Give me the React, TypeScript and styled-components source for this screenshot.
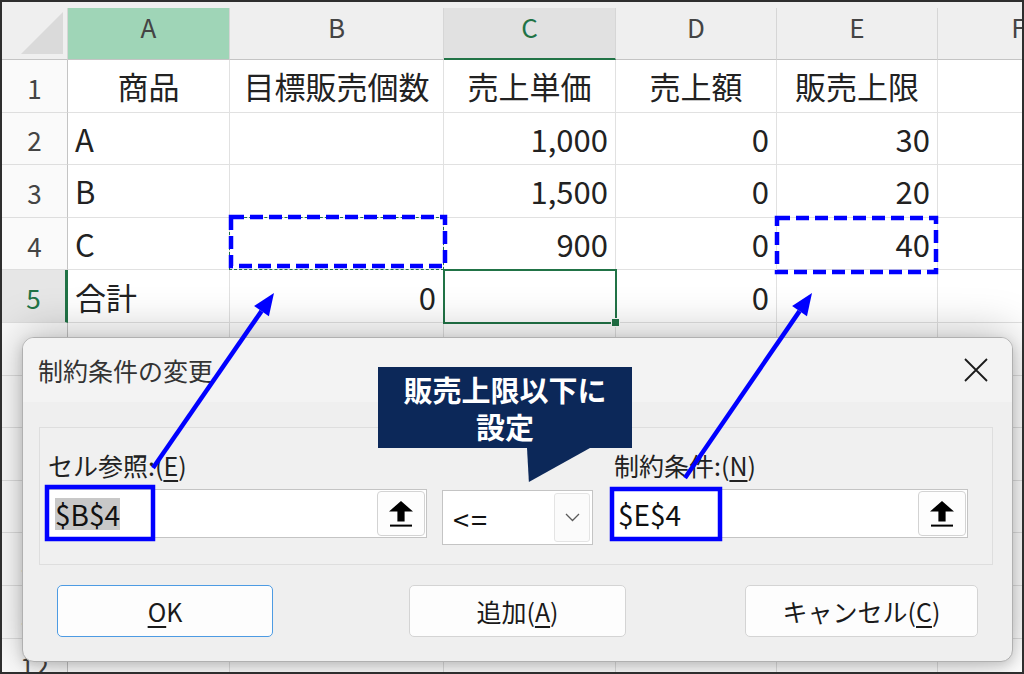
import styled, { createGlobalStyle, css } from 'styled-components'

const GlobalStyle = createGlobalStyle`
  html, body {
    margin: 0;
    padding: 0;
    background: #ffffff;
  }
  body {
    font-family: "Noto Sans CJK JP", "Noto Sans", sans-serif;
  }
`

const Frame = styled.div`
  position: relative;
  width: 1024px;
  height: 674px;
  box-sizing: border-box;
  border: 2px solid #2e2e2e;
  overflow: hidden;
  background: #ffffff;
`

const TopStrip = styled.div`
  height: 6px;
  background: #efefef;
`

const Sheet = styled.div`
  display: grid;
  grid-template-columns: 66px 162px 214px 172px 161px 161px 162px;
  grid-template-rows: 52px;
  grid-auto-rows: 52.6px;
  width: max-content;
`

const Corner = styled.div`
  position: relative;
  box-sizing: border-box;
  background: #efefef;
  border-right: 1px solid #d6d6d6;
  border-bottom: 1px solid #c4c4c4;

  &::after {
    content: '';
    position: absolute;
    right: 4px;
    bottom: 5px;
    width: 42px;
    height: 42px;
    background: #dadada;
    clip-path: polygon(100% 0, 100% 100%, 0 100%);
  }
`

type HeadState = 'normal' | 'active' | 'current'

const ColHead = styled.div<{ $state: HeadState }>`
  display: flex;
  align-items: center;
  justify-content: center;
  box-sizing: border-box;
  padding-bottom: 14px;
  font-size: 26px;
  color: ${p => (p.$state === 'current' ? '#217346' : '#444444')};
  background: ${p =>
    p.$state === 'active' ? '#9fd5b7' : p.$state === 'current' ? '#e1e1e1' : '#efefef'};
  border-right: 1px solid #d6d6d6;
  border-bottom: ${p => (p.$state === 'current' ? '2px solid #217346' : '1px solid #c4c4c4')};
`

const RowHead = styled.div<{ $current?: boolean }>`
  display: flex;
  align-items: center;
  justify-content: center;
  box-sizing: border-box;
  padding-top: 3px;
  font-size: 26px;
  color: ${p => (p.$current ? '#217346' : '#444444')};
  background: ${p => (p.$current ? '#e6e6e6' : '#fafafa')};
  border-bottom: 1px solid #dedede;
  border-right: ${p => (p.$current ? '3px solid #217346' : '1px solid #c4c4c4')};
`

type Align = 'left' | 'center' | 'right'
type Mark = 'selected' | 'copy' | undefined

const selectedMark = css`
  &::after {
    content: '';
    position: absolute;
    left: -1px;
    top: -1px;
    right: -2px;
    bottom: -2px;
    border: 2px solid #217346;
  }
  &::before {
    content: '';
    position: absolute;
    right: -5px;
    bottom: -5px;
    width: 7px;
    height: 7px;
    background: #217346;
    border: 1px solid #ffffff;
    z-index: 1;
  }
`

const copyMark = css`
  &::after {
    content: '';
    position: absolute;
    left: -1px;
    top: -1px;
    right: -1px;
    bottom: -1px;
    border: 1px dashed #217346;
  }
`

const Cell = styled.div<{ $align: Align; $mark?: Mark }>`
  position: relative;
  display: flex;
  align-items: center;
  justify-content: ${p =>
    p.$align === 'right' ? 'flex-end' : p.$align === 'center' ? 'center' : 'flex-start'};
  box-sizing: border-box;
  padding: 0 7px;
  border-right: 1px solid #e1e1e1;
  border-bottom: 1px solid #e1e1e1;
  font-size: 31px;
  color: #222222;
  white-space: nowrap;
  z-index: ${p => (p.$mark ? 2 : 'auto')};
  ${p => p.$mark === 'selected' && selectedMark}
  ${p => p.$mark === 'copy' && copyMark}
`

/* dialog */

const Dialog = styled.div`
  position: absolute;
  left: 20px;
  top: 335px;
  width: 991px;
  height: 325px;
  box-sizing: border-box;
  display: flex;
  flex-direction: column;
  border: 1px solid #b0b0b0;
  border-radius: 12px;
  background: #efefef;
  box-shadow: 0 -4px 44px rgba(0, 0, 0, 0.26), 0 4px 12px rgba(0, 0, 0, 0.16);
  overflow: hidden;
  color: #1f1f1f;
  z-index: 3;
`

const TitleBar = styled.div`
  flex: none;
  height: 64px;
  display: flex;
  align-items: center;
  justify-content: space-between;
  padding: 0 24px 0 15px;
  background: #f3f3f3;
  font-size: 25px;
  color: #333333;
`

const Body = styled.div`
  padding: 25px 19px 0 16px;
`

const Panel = styled.div`
  height: 138px;
  box-sizing: border-box;
  display: flex;
  align-items: flex-start;
  padding: 20px 0 0 6px;
  border: 1px solid #dedede;
  background: #f0f0f0;
`

const Field = styled.div<{ $width: number; $offset?: number }>`
  width: ${p => p.$width}px;
  margin-left: ${p => p.$offset ?? 0}px;
  display: flex;
  flex-direction: column;
  gap: 7px;
`

const Label = styled.div`
  font-size: 25px;
  line-height: 34px;
  padding-left: 2px;
  color: #222222;
`

const Key = styled.span`
  text-decoration: underline;
  text-underline-offset: 4px;
  text-decoration-thickness: 1.5px;
`

const InputBox = styled.div<{ $pad?: number }>`
  height: 49px;
  box-sizing: border-box;
  display: flex;
  align-items: center;
  padding: 0 1px 0 ${p => p.$pad ?? 8}px;
  border: 1px solid #c4c4c4;
  background: #ffffff;
  font-size: 28px;
  color: #111111;
`

const InputText = styled.span<{ $selected?: boolean }>`
  line-height: 32px;
  background: ${p => (p.$selected ? '#c8c8c8' : 'transparent')};
`

const RefButton = styled.div`
  margin-left: auto;
  width: 48px;
  height: 45px;
  box-sizing: border-box;
  display: flex;
  align-items: center;
  justify-content: center;
  border: 1px solid #d3d3d3;
  border-radius: 4px;
  background: #fdfdfd;
`

const Dropdown = styled.div`
  margin: 42px 0 0 15px;
  width: 151px;
  height: 55px;
  box-sizing: border-box;
  display: flex;
  align-items: center;
  padding: 2px 2px 2px 10px;
  border: 1px solid #c4c4c4;
  background: #ffffff;
  font-size: 29px;
  letter-spacing: 2px;
  color: #111111;
`

const DropButton = styled.div`
  margin-left: auto;
  width: 36px;
  height: 100%;
  box-sizing: border-box;
  display: flex;
  align-items: center;
  justify-content: center;
  border: 1px solid #e4e4e4;
  border-radius: 3px;
  background: #fbfbfb;
`

const ButtonRow = styled.div`
  display: flex;
  justify-content: space-between;
  margin-top: 20px;
  padding: 0 15px 0 18px;
`

const Button = styled.div<{ $width: number; $primary?: boolean; $shift?: number }>`
  width: ${p => p.$width}px;
  height: 52px;
  margin-left: ${p => p.$shift ?? 0}px;
  box-sizing: border-box;
  display: flex;
  align-items: center;
  justify-content: center;
  border: ${p => (p.$primary ? '1.5px solid #4d9be3' : '1px solid #d4d4d4')};
  border-radius: 5px;
  background: #fdfdfd;
  font-size: 25px;
  color: #1a1a1a;
`

/* annotations */

const Overlay = styled.svg`
  position: absolute;
  left: 0;
  top: 0;
  z-index: 4;
  pointer-events: none;
`

const Callout = styled.div`
  position: absolute;
  left: 376px;
  top: 365px;
  width: 254px;
  height: 81px;
  display: flex;
  flex-direction: column;
  justify-content: center;
  background: #0c2859;
  color: #ffffff;
  font-size: 29px;
  font-weight: 700;
  line-height: 37px;
  text-align: center;
  z-index: 5;

  &::after {
    content: '';
    position: absolute;
    left: 149px;
    top: 100%;
    width: 63px;
    height: 34px;
    background: #0c2859;
    clip-path: polygon(0 0, 100% 0, 3% 100%);
  }
`

const columns = ['A', 'B', 'C', 'D', 'E', 'F']

const rows: string[][] = [
  ['商品', '目標販売個数', '売上単価', '売上額', '販売上限', ''],
  ['A', '', '1,000', '0', '30', ''],
  ['B', '', '1,500', '0', '20', ''],
  ['C', '', '900', '0', '40', ''],
  ['合計', '0', '', '0', '', ''],
  ['', '', '', '', '', ''],
  ['', '', '', '', '', ''],
  ['', '', '', '', '', ''],
  ['', '', '', '', '', ''],
  ['', '', '', '', '', ''],
  ['', '', '', '', '', ''],
  ['', '', '', '', '', ''],
]

function alignFor(row: number, value: string): Align {
  if (row === 0) return 'center'
  return /^[\d,]+$/.test(value) ? 'right' : 'left'
}

function markFor(row: number, col: number): Mark {
  if (row === 4 && col === 2) return 'selected'
  if (row === 3 && col === 1) return 'copy'
  return undefined
}

function UpArrow() {
  return (
    <svg width="24" height="26" viewBox="0 0 24 26">
      <path d="M12 0 L24 10.5 L15.6 10.5 L15.6 20.5 L8.4 20.5 L8.4 10.5 L0 10.5 Z" fill="#000" />
      <rect x="1" y="23.6" width="22" height="2" fill="#000" />
    </svg>
  )
}

function Chevron() {
  return (
    <svg width="15" height="9" viewBox="0 0 15 9">
      <polyline points="1,1 7.5,7.5 14,1" fill="none" stroke="#5a5a5a" strokeWidth="1.3" />
    </svg>
  )
}

function CloseIcon() {
  return (
    <svg width="24" height="24" viewBox="0 0 24 24">
      <path d="M1 1 L23 23 M23 1 L1 23" stroke="#1a1a1a" strokeWidth="1.8" fill="none" />
    </svg>
  )
}

function Arrow({ x1, y1, x2, y2 }: { x1: number; y1: number; x2: number; y2: number }) {
  const dx = x2 - x1
  const dy = y2 - y1
  const len = Math.hypot(dx, dy)
  const ux = dx / len
  const uy = dy / len
  const head = 22
  const half = 9
  const bx = x2 - ux * head
  const by = y2 - uy * head
  const pts = `${x2},${y2} ${bx - uy * half},${by + ux * half} ${bx + uy * half},${by - ux * half}`
  return (
    <g>
      <line x1={x1} y1={y1} x2={bx} y2={by} stroke="#0000ff" strokeWidth="4.5" />
      <polygon points={pts} fill="#0000ff" />
    </g>
  )
}

export default function App() {
  return (
    <>
      <GlobalStyle />
      <Frame>
        <TopStrip />
        <Sheet>
          <Corner />
          {columns.map(c => (
            <ColHead key={c} $state={c === 'A' ? 'active' : c === 'C' ? 'current' : 'normal'}>
              {c}
            </ColHead>
          ))}
          {rows.map((row, r) => (
            <>
              <RowHead key={`h${r}`} $current={r === 4}>
                {r + 1}
              </RowHead>
              {row.map((value, c) => (
                <Cell key={`${r}-${c}`} $align={alignFor(r, value)} $mark={markFor(r, c)}>
                  {value}
                </Cell>
              ))}
            </>
          ))}
        </Sheet>

        <Dialog>
          <TitleBar>
            <span>制約条件の変更</span>
            <CloseIcon />
          </TitleBar>
          <Body>
            <Panel>
              <Field $width={381}>
                <Label>
                  セル参照:(<Key>E</Key>)
                </Label>
                <InputBox>
                  <InputText $selected>$B$4</InputText>
                  <RefButton>
                    <UpArrow />
                  </RefButton>
                </InputBox>
              </Field>
              <Dropdown>
                <span>&lt;=</span>
                <DropButton>
                  <Chevron />
                </DropButton>
              </Dropdown>
              <Field $width={356} $offset={19}>
                <Label>
                  制約条件:(<Key>N</Key>)
                </Label>
                <InputBox $pad={5}>
                  <InputText>$E$4</InputText>
                  <RefButton>
                    <UpArrow />
                  </RefButton>
                </InputBox>
              </Field>
            </Panel>
            <ButtonRow>
              <Button $width={216} $primary>
                <Key>O</Key>K
              </Button>
              <Button $width={217} $shift={17}>
                追加(<Key>A</Key>)
              </Button>
              <Button $width={233}>
                キャンセル(<Key>C</Key>)
              </Button>
            </ButtonRow>
          </Body>
        </Dialog>

        <Overlay width="1020" height="670" viewBox="2 2 1020 670">
          <rect x="231" y="217" width="214" height="49" fill="none" stroke="#0000ff" strokeWidth="4.5" strokeDasharray="13 6" />
          <rect x="777" y="218" width="159" height="54" fill="none" stroke="#0000ff" strokeWidth="4.5" strokeDasharray="13 6" />
          <rect x="47" y="487" width="106" height="52" fill="none" stroke="#0000ff" strokeWidth="4.5" />
          <rect x="612" y="489" width="108" height="50" fill="none" stroke="#0000ff" strokeWidth="4.5" />
          <Arrow x1={153} y1={468} x2={274} y2={293} />
          <Arrow x1={685} y1={478} x2={812} y2={293} />
        </Overlay>

        <Callout>
          <span>販売上限以下に</span>
          <span>設定</span>
        </Callout>
      </Frame>
    </>
  )
}
